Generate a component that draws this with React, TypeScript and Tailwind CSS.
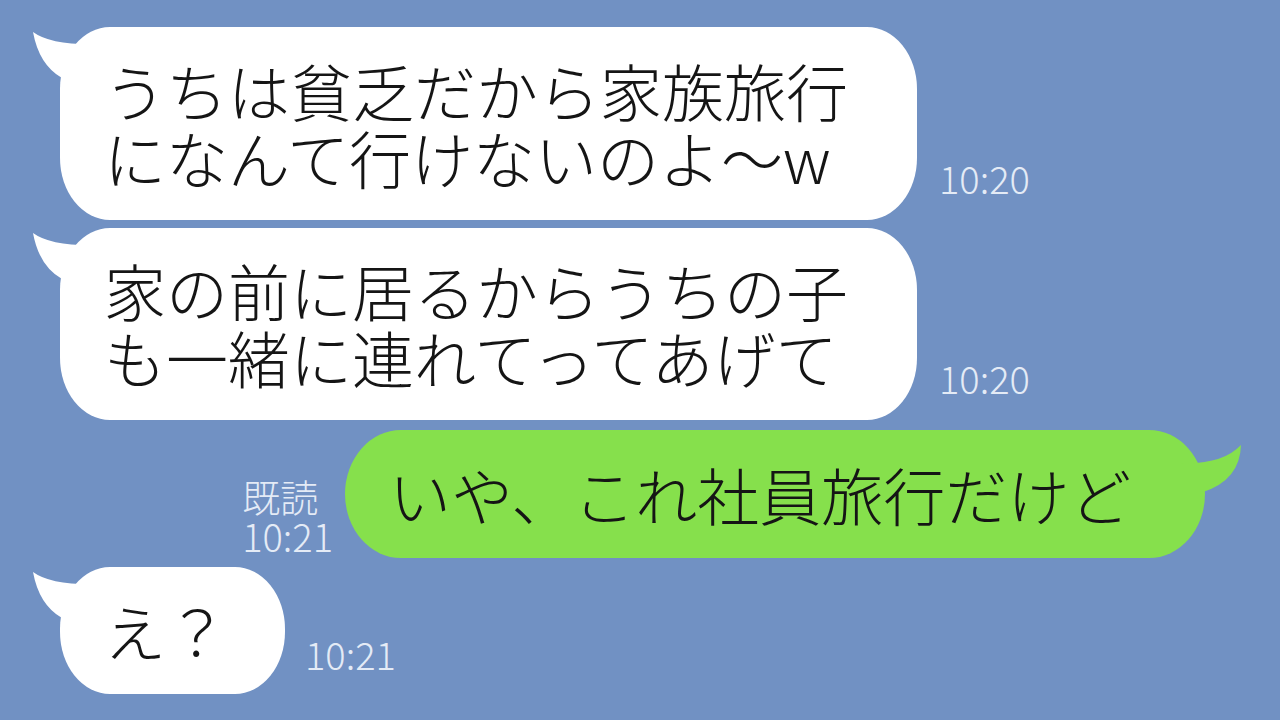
import React from "react";

const font = { fontFamily: '"Noto Sans CJK JP", "Noto Sans", sans-serif' };

function LeftTail() {
  return (
    <svg
      className="absolute left-[-30px] top-0"
      width="80"
      height="80"
      viewBox="0 0 80 80"
    >
      <path d="M3,5 Q22,19 72,17 L72,73 L32,73 L32,51 Q9,38 3,5 Z" fill="#ffffff" />
    </svg>
  );
}

function RightTail() {
  return (
    <svg
      className="absolute right-[-40px] top-0"
      width="80"
      height="80"
      viewBox="0 0 80 80"
    >
      <path d="M76,15 Q75,50 38,62 L15,62 L15,33 Q57,35 76,15 Z" fill="#86e04c" />
    </svg>
  );
}

function LeftMessage({
  text,
  width,
  height,
  time,
  timeGap,
  timeBottom,
}: {
  text: string[];
  width: string;
  height: string;
  time: string;
  timeGap: string;
  timeBottom: string;
}) {
  return (
    <div className="flex items-end pl-[60px]">
      <div
        className={`relative flex flex-col justify-center rounded-[50px/62px] bg-white pl-[44px] ${width} ${height}`}
      >
        <LeftTail />
        <p className="relative whitespace-nowrap text-[62px] font-light leading-[67px] text-[#151515]">
          {text.map((line, i) => (
            <React.Fragment key={line}>
              {i > 0 && <br />}
              {line}
            </React.Fragment>
          ))}
        </p>
      </div>
      <span
        className={`text-[38px] font-light leading-[40px] text-[#e4ebf6] ${timeGap} ${timeBottom}`}
      >
        {time}
      </span>
    </div>
  );
}

export default function App() {
  return (
    <div
      className="flex h-[720px] w-[1280px] flex-col overflow-hidden bg-[#7191c3] pt-[27px]"
      style={font}
    >
      <LeftMessage
        text={["うちは貧乏だから家族旅行", "になんて行けないのよ～w"]}
        width="w-[857px]"
        height="h-[193px]"
        time="10:20"
        timeGap="ml-[22px]"
        timeBottom="mb-[22px]"
      />
      <div className="mt-[8px]">
        <LeftMessage
          text={["家の前に居るからうちの子", "も一緒に連れてってあげて"]}
          width="w-[857px]"
          height="h-[192px]"
          time="10:20"
          timeGap="ml-[22px]"
          timeBottom="mb-[22px]"
        />
      </div>

      <div className="mt-[10px] flex items-end justify-end pr-[75px]">
        <p className="mb-[2px] mr-[12px] text-[38px] font-light leading-[40px] text-[#e4ebf6]">
          既読
          <br />
          10:21
        </p>
        <div className="relative flex h-[128px] w-[860px] items-center rounded-[56px/64px] bg-[#86e04c] pl-[44px]">
          <RightTail />
          <p className="relative whitespace-nowrap text-[62px] font-light leading-[67px] text-[#151515]">
            いや、これ社員旅行だけど
          </p>
        </div>
      </div>

      <div className="mt-[9px]">
        <LeftMessage
          text={["え？"]}
          width="w-[225px]"
          height="h-[127px]"
          time="10:21"
          timeGap="ml-[20px]"
          timeBottom="mb-[20px]"
        />
      </div>
    </div>
  );
}
